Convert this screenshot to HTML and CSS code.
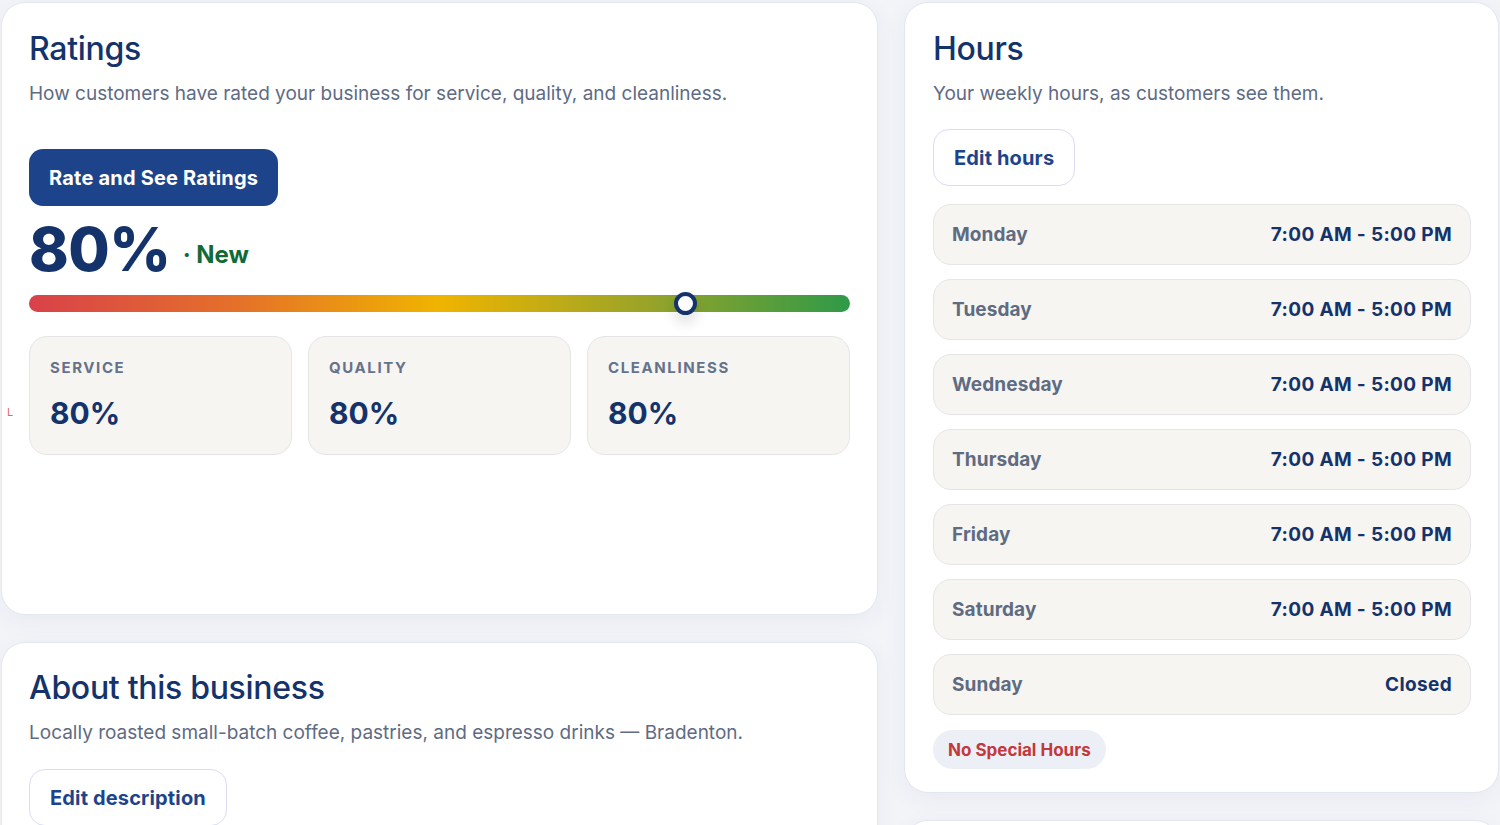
FILE: index.html
```html
<!DOCTYPE html>
<html lang="en">
<head>
<meta charset="utf-8">
<title>Business dashboard</title>
<link rel="stylesheet" href="styles.css">
</head>
<body>
<span class="stray">L</span>
<div class="page">
  <div class="col">
    <section class="card ratings">
      <h2 class="title">Ratings</h2>
      <p class="sub">How customers have rated your business for service, quality, and cleanliness.</p>
      <button class="btn-primary">Rate and See Ratings</button>
      <div class="score">
        <span class="big">80%</span>
        <span class="new">· New</span>
      </div>
      <div class="bar">
        <span class="thumb" style="left: 80%"></span>
      </div>
      <div class="stats">
        <div class="stat"><div class="stat-label">Service</div><div class="stat-value">80%</div></div>
        <div class="stat"><div class="stat-label">Quality</div><div class="stat-value">80%</div></div>
        <div class="stat"><div class="stat-label">Cleanliness</div><div class="stat-value">80%</div></div>
      </div>
    </section>
    <section class="card about">
      <h2 class="title">About this business</h2>
      <p class="sub">Locally roasted small-batch coffee, pastries, and espresso drinks — Bradenton.</p>
      <button class="btn-outline btn-desc">Edit description</button>
    </section>
  </div>
  <div class="col">
    <section class="card hours">
      <h2 class="title">Hours</h2>
      <p class="sub">Your weekly hours, as customers see them.</p>
      <button class="btn-outline btn-hours">Edit hours</button>
      <ul class="days">
        <li class="day"><span class="day-name">Monday</span><span class="day-time">7:00 AM - 5:00 PM</span></li>
        <li class="day"><span class="day-name">Tuesday</span><span class="day-time">7:00 AM - 5:00 PM</span></li>
        <li class="day"><span class="day-name">Wednesday</span><span class="day-time">7:00 AM - 5:00 PM</span></li>
        <li class="day"><span class="day-name">Thursday</span><span class="day-time">7:00 AM - 5:00 PM</span></li>
        <li class="day"><span class="day-name">Friday</span><span class="day-time">7:00 AM - 5:00 PM</span></li>
        <li class="day"><span class="day-name">Saturday</span><span class="day-time">7:00 AM - 5:00 PM</span></li>
        <li class="day"><span class="day-name">Sunday</span><span class="day-time">Closed</span></li>
      </ul>
      <span class="pill">No Special Hours</span>
    </section>
    <section class="card next"></section>
  </div>
</div>
</body>
</html>
```
FILE: styles.css
```css
* { box-sizing: border-box; }
html, body { margin: 0; padding: 0; }
body {
  background: #f3f4f8;
  font-family: Inter, "Noto Sans", "Liberation Sans", sans-serif;
  color: #15336b;
  width: 1500px;
  height: 825px;
  overflow: hidden;
  position: relative;
}
.stray {
  position: absolute;
  left: 7px;
  top: 405px;
  font-size: 11px;
  color: #e06a5a;
}
.page {
  display: grid;
  grid-template-columns: 877px 595px;
  column-gap: 26px;
  padding: 2px 0 0 1px;
  align-items: start;
}
.col {
  display: flex;
  flex-direction: column;
  gap: 27px;
}
.card {
  background: #fff;
  border: 1px solid #e3e7f0;
  border-radius: 24px;
  box-shadow: 0 6px 24px rgba(40, 55, 110, 0.05);
}
.title {
  margin: 0;
  font-size: 32px;
  line-height: 38px;
  font-weight: 500;
  color: #15336b;
  letter-spacing: -0.3px;
}
.sub {
  margin: 12px 0 0;
  font-size: 19px;
  line-height: 28px;
  color: #5e6b84;
}
.ratings {
  padding: 27px 27px 0;
  min-height: 613px;
}
.btn-primary {
  margin-top: 41px;
  height: 57px;
  padding: 0 20px;
  border: 0;
  border-radius: 14px;
  background: #1d448b;
  color: #fff;
  font-family: inherit;
  font-size: 20px;
  font-weight: 700;
  letter-spacing: 0.2px;
  display: flex;
  align-items: center;
}
.score {
  margin-top: 14px;
  display: flex;
  align-items: center;
  gap: 12px;
  height: 58px;
}
.big {
  font-size: 60px;
  line-height: 58px;
  font-weight: 800;
  color: #15336b;
  letter-spacing: -0.5px;
}
.new {
  font-size: 24px;
  line-height: 30px;
  font-weight: 700;
  color: #116a37;
  margin-top: 12px;
}
.bar {
  position: relative;
  margin-top: 17px;
  height: 17px;
  border-radius: 9px;
  background: linear-gradient(90deg, #d9414a 0%, #e4702a 25%, #f0b400 50%, #9aa428 75%, #2e9a48 100%);
}
.thumb {
  position: absolute;
  top: 50%;
  width: 23px;
  height: 23px;
  margin: -11.5px 0 0 -11.5px;
  border-radius: 50%;
  background: #fff;
  border: 4px solid #15336b;
  box-shadow: 0 8px 14px rgba(0, 0, 0, 0.12);
}
.stats {
  margin-top: 24px;
  display: grid;
  grid-template-columns: repeat(3, 1fr);
  gap: 16px;
}
.stat {
  height: 119px;
  background: #f6f5f2;
  border: 1px solid #e5e5e6;
  border-radius: 18px;
  padding: 22px 20px 0;
}
.stat-label {
  font-size: 15px;
  line-height: 18px;
  font-weight: 700;
  letter-spacing: 1.6px;
  text-transform: uppercase;
  color: #66728a;
}
.stat-value {
  margin-top: 18px;
  font-size: 30px;
  line-height: 36px;
  font-weight: 700;
  color: #15336b;
}
.about {
  padding: 26px 27px 40px;
}
.btn-outline {
  display: flex;
  align-items: center;
  height: 57px;
  padding: 0 20px;
  background: #fff;
  border: 1px solid #d9dcf6;
  border-radius: 16px;
  color: #1d448b;
  font-family: inherit;
  font-size: 20px;
  font-weight: 700;
  letter-spacing: 0.15px;
}
.btn-desc { margin-top: 22px; }
.hours {
  padding: 27px 27px 23px 28px;
}
.btn-hours { margin-top: 21px; height: 57px; }
.days {
  list-style: none;
  margin: 18px 0 0;
  padding: 0;
  display: flex;
  flex-direction: column;
  gap: 14px;
}
.day {
  height: 61px;
  display: flex;
  align-items: center;
  justify-content: space-between;
  padding: 0 18px;
  background: #f6f5f2;
  border: 1px solid #e5e5e6;
  border-radius: 18px;
  font-size: 19px;
  font-weight: 700;
}
.day-name { color: #5f6b81; letter-spacing: 0.1px; }
.day-time { color: #15336b; letter-spacing: 0.35px; }
.pill {
  display: inline-flex;
  align-items: center;
  margin-top: 15px;
  height: 39px;
  padding: 0 15px;
  border-radius: 20px;
  background: #eceff6;
  color: #c3383c;
  font-size: 17px;
  font-weight: 700;
}
.next {
  height: 120px;
}
```
